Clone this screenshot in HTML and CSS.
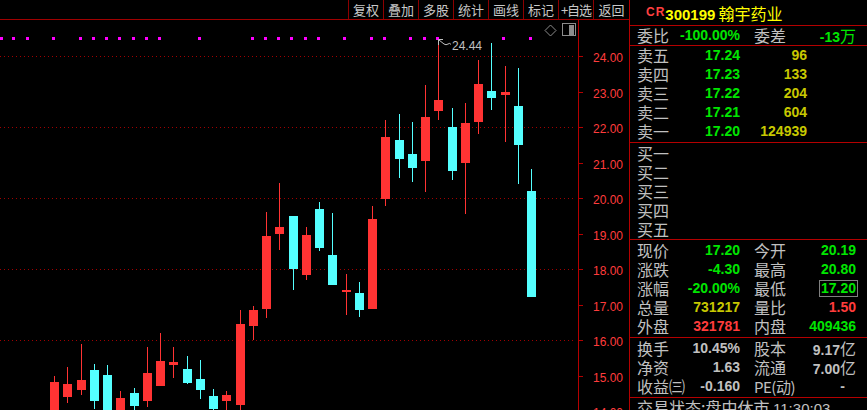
FILE: index.html
```html
<!DOCTYPE html>
<html lang="zh">
<head>
<meta charset="utf-8">
<title>300199 翰宇药业</title>
<link rel="stylesheet" href="styles.css">
</head>
<body>
<div class="screen">
  <div class="chart">
    <div class="toolbar">
      <span class="tb">复权</span><span class="tb">叠加</span><span class="tb">多股</span><span class="tb">统计</span><span class="tb">画线</span><span class="tb">标记</span><span class="tb tb-add">+自选</span><span class="tb tb-last">返回</span>
    </div>
    <svg class="plot" width="629" height="390" viewBox="0 20 629 390" shape-rendering="crispEdges">
      <g class="grid">
        <line x1="0" y1="56.5" x2="576" y2="56.5"/>
        <line x1="0" y1="127.5" x2="576" y2="127.5"/>
        <line x1="0" y1="198.5" x2="576" y2="198.5"/>
        <line x1="0" y1="269.5" x2="576" y2="269.5"/>
        <line x1="0" y1="340.5" x2="576" y2="340.5"/>
      </g>
      <g class="mk">
        <rect x="0" y="37" width="3" height="3"/><rect x="12" y="37" width="3" height="3"/><rect x="26" y="37" width="3" height="3"/><rect x="52" y="37" width="3" height="3"/><rect x="79" y="37" width="3" height="3"/><rect x="92" y="37" width="3" height="3"/><rect x="105" y="37" width="3" height="3"/><rect x="118" y="37" width="3" height="3"/><rect x="132" y="37" width="3" height="3"/><rect x="145" y="37" width="3" height="3"/><rect x="158" y="37" width="3" height="3"/><rect x="198" y="37" width="3" height="3"/><rect x="251" y="37" width="3" height="3"/><rect x="264" y="37" width="3" height="3"/><rect x="277" y="37" width="3" height="3"/><rect x="290" y="37" width="3" height="3"/><rect x="304" y="37" width="3" height="3"/><rect x="317" y="37" width="3" height="3"/><rect x="343" y="37" width="3" height="3"/><rect x="370" y="37" width="3" height="3"/><rect x="383" y="37" width="3" height="3"/><rect x="409" y="37" width="3" height="3"/><rect x="423" y="37" width="3" height="3"/><rect x="436" y="37" width="3" height="3"/><rect x="502" y="37" width="3" height="3"/><rect x="529" y="37" width="3" height="3"/>
      </g>
      <g class="up">
        <rect x="54" y="376" width="1" height="36"/><rect x="50" y="382" width="9" height="30"/>
        <rect x="67" y="367" width="1" height="36"/><rect x="63" y="384" width="9" height="13"/>
        <rect x="81" y="344" width="1" height="51"/><rect x="77" y="380" width="9" height="10"/>
        <rect x="120" y="391" width="1" height="21"/><rect x="116" y="398" width="9" height="14"/>
        <rect x="147" y="347" width="1" height="60"/><rect x="143" y="373" width="9" height="28"/>
        <rect x="160" y="333" width="1" height="53"/><rect x="156" y="361" width="9" height="25"/>
        <rect x="173" y="347" width="1" height="31"/><rect x="169" y="362" width="9" height="3"/>
        <rect x="226" y="391" width="1" height="21"/><rect x="222" y="395" width="9" height="6"/>
        <rect x="240" y="310" width="1" height="102"/><rect x="236" y="324" width="9" height="81"/>
        <rect x="253" y="306" width="1" height="34"/><rect x="249" y="310" width="9" height="16"/>
        <rect x="266" y="212" width="1" height="106"/><rect x="262" y="236" width="9" height="73"/>
        <rect x="279" y="183" width="1" height="67"/><rect x="275" y="227" width="9" height="7"/>
        <rect x="306" y="227" width="1" height="53"/><rect x="302" y="235" width="9" height="40"/>
        <rect x="346" y="274" width="1" height="41"/><rect x="342" y="290" width="9" height="2"/>
        <rect x="372" y="206" width="1" height="103"/><rect x="368" y="219" width="9" height="90"/>
        <rect x="385" y="120" width="1" height="86"/><rect x="381" y="137" width="9" height="62"/>
        <rect x="425" y="85" width="1" height="107"/><rect x="421" y="117" width="9" height="44"/>
        <rect x="438" y="40" width="1" height="80"/><rect x="434" y="100" width="9" height="11"/>
        <rect x="465" y="103" width="1" height="111"/><rect x="461" y="123" width="9" height="40"/>
        <rect x="478" y="60" width="1" height="74"/><rect x="474" y="84" width="9" height="38"/>
        <rect x="505" y="66" width="1" height="76"/><rect x="501" y="92" width="9" height="3"/>
      </g>
      <g class="dn">
        <rect x="94" y="364" width="1" height="45"/><rect x="90" y="370" width="9" height="31"/>
        <rect x="107" y="365" width="1" height="47"/><rect x="103" y="375" width="9" height="37"/>
        <rect x="134" y="388" width="1" height="24"/><rect x="130" y="393" width="9" height="13"/>
        <rect x="187" y="356" width="1" height="28"/><rect x="183" y="369" width="9" height="14"/>
        <rect x="200" y="360" width="1" height="39"/><rect x="196" y="379" width="9" height="11"/>
        <rect x="213" y="389" width="1" height="23"/><rect x="209" y="396" width="9" height="13"/>
        <rect x="293" y="216" width="1" height="74"/><rect x="289" y="216" width="9" height="53"/>
        <rect x="319" y="202" width="1" height="49"/><rect x="315" y="209" width="9" height="39"/>
        <rect x="332" y="213" width="1" height="72"/><rect x="328" y="255" width="9" height="30"/>
        <rect x="359" y="282" width="1" height="35"/><rect x="355" y="293" width="9" height="17"/>
        <rect x="399" y="114" width="1" height="64"/><rect x="395" y="140" width="9" height="19"/>
        <rect x="412" y="122" width="1" height="60"/><rect x="408" y="154" width="9" height="14"/>
        <rect x="452" y="108" width="1" height="72"/><rect x="448" y="127" width="9" height="44"/>
        <rect x="491" y="43" width="1" height="67"/><rect x="487" y="91" width="9" height="7"/>
        <rect x="518" y="68" width="1" height="116"/><rect x="514" y="106" width="9" height="39"/>
        <rect x="531" y="169" width="1" height="128"/><rect x="527" y="191" width="9" height="106"/>
      </g>
      <path class="note" d="M438.5 45 V39.5 H443 M439 40 L444 44 Q446 45.5 448 44 Q450 42.5 451 44.5" shape-rendering="auto"/>
      <text class="hi" x="452" y="50">24.44</text>
      <polygon class="ico" points="550.5,25 556,30.5 550.5,36 545,30.5" shape-rendering="auto"/>
      <rect class="ico" x="562.5" y="23.5" width="13" height="12"/>
      <rect class="icofill" x="569" y="25" width="5" height="10"/>
      <line class="axis" x1="578.5" y1="20" x2="578.5" y2="410"/>
      <g class="axis">
        <line x1="578" y1="56.5" x2="583" y2="56.5"/>
        <line x1="578" y1="92.5" x2="583" y2="92.5"/>
        <line x1="578" y1="127.5" x2="583" y2="127.5"/>
        <line x1="578" y1="163.5" x2="583" y2="163.5"/>
        <line x1="578" y1="198.5" x2="583" y2="198.5"/>
        <line x1="578" y1="234.5" x2="583" y2="234.5"/>
        <line x1="578" y1="269.5" x2="583" y2="269.5"/>
        <line x1="578" y1="305.5" x2="583" y2="305.5"/>
        <line x1="578" y1="340.5" x2="583" y2="340.5"/>
        <line x1="578" y1="376.5" x2="583" y2="376.5"/>
      </g>
      <g class="lbl">
        <text x="593" y="62">24.00</text>
        <text x="593" y="98">23.00</text>
        <text x="593" y="133">22.00</text>
        <text x="593" y="169">21.00</text>
        <text x="593" y="204">20.00</text>
        <text x="593" y="240">19.00</text>
        <text x="593" y="275">18.00</text>
        <text x="593" y="311">17.00</text>
        <text x="593" y="346">16.00</text>
        <text x="593" y="382">15.00</text>
        <text x="593" y="417">14.00</text>
      </g>
    </svg>
  </div>

  <aside class="panel">
    <div class="hdr"><span class="cr">CR</span><span class="code">300199</span><span class="name">翰宇药业</span></div>

    <div class="sec wb">
      <div class="row g4"><span class="lb">委比</span><span class="n g">-100.00%</span><span></span><span class="lb">委差</span><span class="n g">-13<span class="cj">万</span></span></div>
    </div>

    <div class="sec sell">
      <div class="row g3"><span class="lb">卖五</span><span class="n g">17.24</span><span class="n y">96</span></div>
      <div class="row g3"><span class="lb">卖四</span><span class="n g">17.23</span><span class="n y">133</span></div>
      <div class="row g3"><span class="lb">卖三</span><span class="n g">17.22</span><span class="n y">204</span></div>
      <div class="row g3"><span class="lb">卖二</span><span class="n g">17.21</span><span class="n y">604</span></div>
      <div class="row g3"><span class="lb">卖一</span><span class="n g">17.20</span><span class="n y">124939</span></div>
    </div>

    <div class="sec buy">
      <div class="row"><span class="lb">买一</span></div>
      <div class="row"><span class="lb">买二</span></div>
      <div class="row"><span class="lb">买三</span></div>
      <div class="row"><span class="lb">买四</span></div>
      <div class="row"><span class="lb">买五</span></div>
    </div>

    <div class="sec quote">
      <div class="row g4"><span class="lb">现价</span><span class="n g">17.20</span><span></span><span class="lb">今开</span><span class="n g">20.19</span></div>
      <div class="row g4"><span class="lb">涨跌</span><span class="n g">-4.30</span><span></span><span class="lb">最高</span><span class="n g">20.80</span></div>
      <div class="row g4"><span class="lb">涨幅</span><span class="n g">-20.00%</span><span></span><span class="lb">最低</span><span class="n g"><span class="box">17.20</span></span></div>
      <div class="row g4"><span class="lb">总量</span><span class="n y">731217</span><span></span><span class="lb">量比</span><span class="n r">1.50</span></div>
      <div class="row g4"><span class="lb">外盘</span><span class="n r">321781</span><span></span><span class="lb">内盘</span><span class="n g">409436</span></div>
    </div>

    <div class="sec stats">
      <div class="row g4"><span class="lb">换手</span><span class="n w">10.45%</span><span></span><span class="lb">股本</span><span class="n w">9.17<span class="cj">亿</span></span></div>
      <div class="row g4"><span class="lb">净资</span><span class="n w">1.63</span><span></span><span class="lb">流通</span><span class="n w">7.00<span class="cj">亿</span></span></div>
      <div class="row g4"><span class="lb">收益㈢</span><span class="n w">-0.160</span><span></span><span class="lb pe">PE(动)</span><span class="n w dash">-</span></div>
    </div>

    <div class="status">交易状态:盘中休市 <span class="n">11:30:03</span></div>
  </aside>
</div>
</body>
</html>
```

FILE: styles.css
```css
html, body {
  margin: 0;
  padding: 0;
  background: #000;
}

.screen {
  display: flex;
  width: 867px;
  height: 410px;
  overflow: hidden;
  background: #000;
  font-family: "Noto Sans CJK SC", "Liberation Sans", sans-serif;
}

/* ---------- chart column ---------- */
.chart {
  width: 629px;
  flex: none;
  display: flex;
  flex-direction: column;
}

.toolbar {
  height: 20px;
  box-sizing: border-box;
  border-bottom: 1px solid #a00000;
  display: flex;
  justify-content: flex-end;
}

.tb {
  width: 35px;
  box-sizing: border-box;
  border-left: 1px solid #8c0000;
  color: #c8c8c8;
  font-size: 13px;
  line-height: 19px;
  text-align: center;
  white-space: nowrap;
}

.tb-add {
  letter-spacing: -1px;
}

.tb-last {
  width: 36px;
}

.plot {
  display: block;
  background: #000;
}

.grid line {
  stroke: #a00000;
  stroke-width: 1;
  stroke-dasharray: 1 3;
}

.mk rect { fill: #ff00ff; }
.up rect { fill: #ff3333; }
.dn rect { fill: #54ffff; }

.axis, .axis line {
  stroke: #b40000;
  stroke-width: 1;
}

.lbl text {
  fill: #ff3c3c;
  font-family: "Liberation Sans", sans-serif;
  font-size: 12px;
}

.note {
  fill: none;
  stroke: #c0c0c0;
  stroke-width: 1;
}

.hi {
  fill: #c0c0c0;
  font-family: "Liberation Sans", sans-serif;
  font-size: 12px;
}

.ico {
  fill: none;
  stroke: #8c8c8c;
  stroke-width: 1;
}

.icofill { fill: #8c8c8c; }

/* ---------- quote panel ---------- */
.panel {
  width: 238px;
  flex: none;
  box-sizing: border-box;
  border-left: 1px solid #b40000;
  color: #c0c0c0;
  font-size: 16px;
}

.hdr {
  height: 26px;
  box-sizing: border-box;
  border-bottom: 1px solid #b40000;
  padding-left: 16px;
  line-height: 25px;
  white-space: nowrap;
}

.cr {
  color: #ff4040;
  font-family: "Liberation Sans", sans-serif;
  font-weight: bold;
  font-size: 12px;
  letter-spacing: 1px;
  vertical-align: 4px;
}

.code {
  color: #ffff00;
  font-family: "Liberation Sans", sans-serif;
  font-weight: bold;
  font-size: 15px;
}

.name {
  color: #ffff00;
  margin-left: 3px;
}

.sec {
  border-bottom: 1px solid #b40000;
  box-sizing: border-box;
  padding-left: 7px;
}

.wb { height: 20px; }
.sell { height: 97px; }
.buy { height: 97px; padding-top: 1px; }
.quote { height: 98px; padding-top: 1px; }
.stats { height: 60px; padding-top: 1px; }

.row {
  height: 19px;
  line-height: 19px;
  white-space: nowrap;
}

.g4 {
  display: grid;
  grid-template-columns: 40px 63px 14px 36px 66px;
}

.g3 {
  display: grid;
  grid-template-columns: 40px 63px 67px;
}

.n {
  font-family: "Liberation Sans", sans-serif;
  font-weight: bold;
  font-size: 14px;
  text-align: right;
}

.cj {
  font-family: "Noto Sans CJK SC", sans-serif;
  font-weight: normal;
  font-size: 16px;
}

.g { color: #00e600; }
.y { color: #c8c800; }
.r { color: #ff3c3c; }
.w { color: #c0c0c0; }

.pe {
  font-size: 15px;
  letter-spacing: -0.5px;
}

.dash {
  padding-right: 11px;
}

.box {
  display: inline-block;
  border: 1px solid #808080;
  line-height: 15px;
  padding: 0 1px;
  margin-right: -2px;
}

.status {
  padding-left: 7px;
  height: 19px;
  line-height: 19px;
  white-space: nowrap;
}

.status .n {
  font-weight: normal;
  font-size: 15px;
}
```
